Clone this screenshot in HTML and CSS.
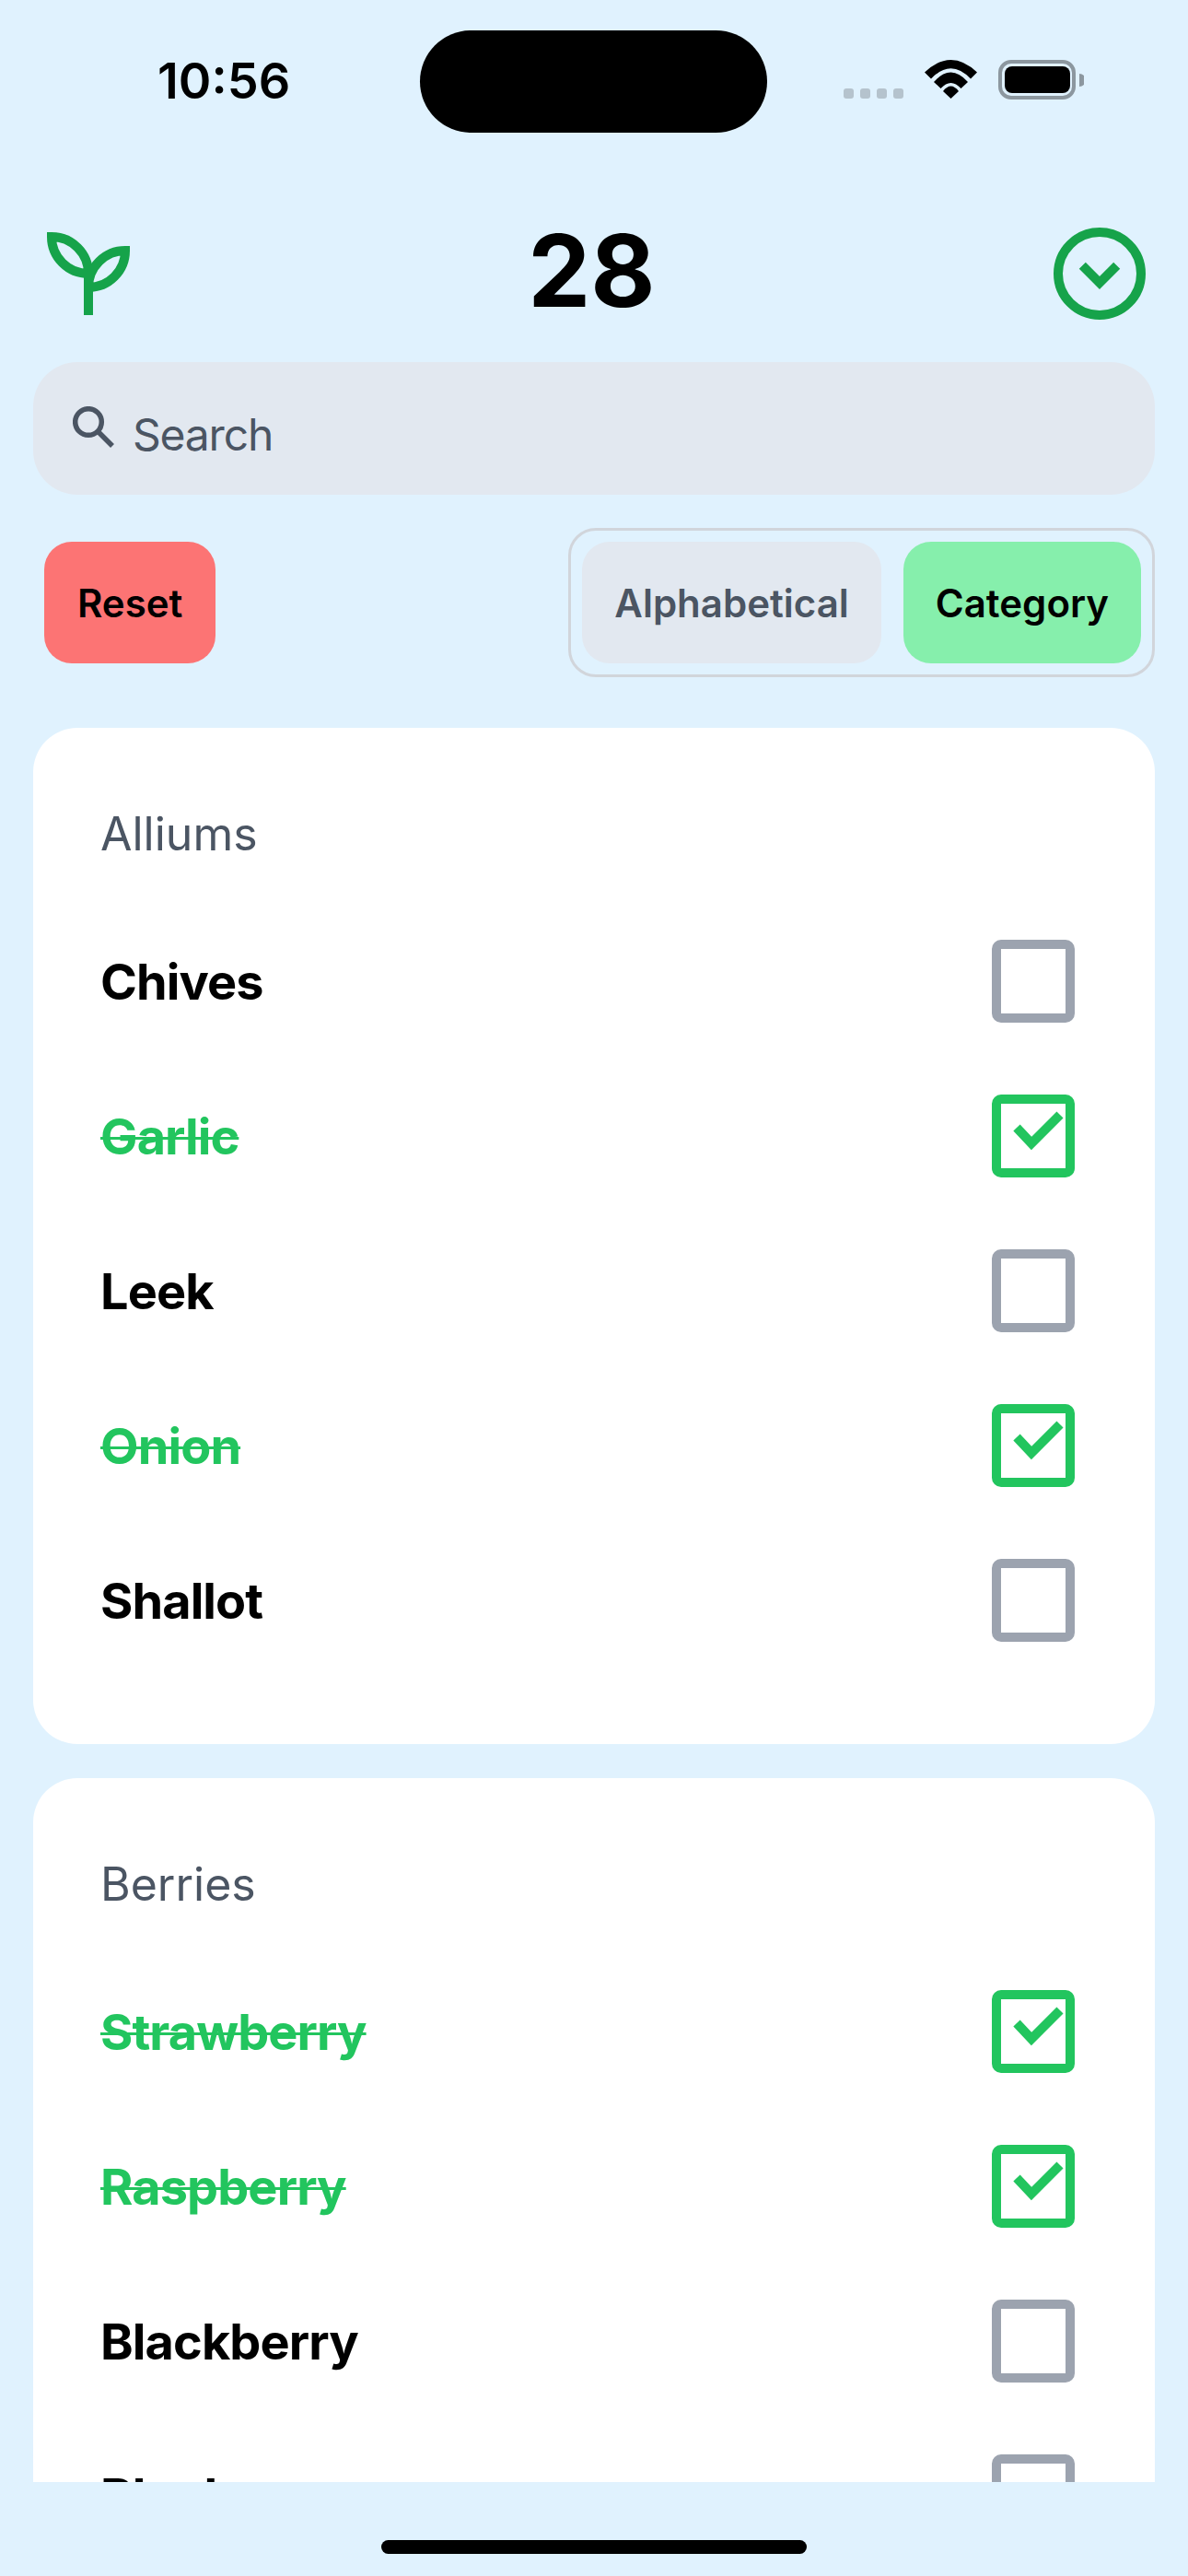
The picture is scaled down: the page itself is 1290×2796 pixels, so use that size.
FILE: index.html
```html
<!DOCTYPE html>
<html lang="en">

<head>
  <meta charset="UTF-8">
  <meta name="viewport" content="width=device-width, initial-scale=1.0">
  <title>Garden</title>
  <link rel="stylesheet" href="styles.css">
</head>

<body>
  <div class="screen">
    <div class="status">
      <span class="time">10:56</span>
      <div class="island"></div>
      <div class="status-icons">
        <div class="signal"><i></i><i></i><i></i><i></i></div>
        <svg class="wifi" width="57" height="42" viewBox="0 0 57 42">
          <path d="M0 13.5Q28.5 -13.5 57 13.5L50 20.5Q28.5 -2 7 20.5Z" />
          <path d="M10 24Q28.5 3 47 24L39.5 31Q28.5 19 17.500 31Z" />
          <path d="M20 34Q28.500 23 37 34L28.5 42Z" />
        </svg>
        <svg class="battery" width="93" height="43" viewBox="0 0 93 43">
          <rect x="2" y="2" width="80" height="39" rx="12" fill="none" stroke="#8c979f" stroke-width="4" />
          <rect x="7" y="7" width="71" height="29" rx="8" />
          <path d="M88 15a7 7 0 0 1 0 14Z" fill="#8c979f" />
        </svg>
      </div>
    </div>

    <header class="top">
      <svg class="sprout" width="90" height="90" viewBox="0 0 90 90" fill="none" stroke="#16a34a" stroke-width="10">
        <path d="M5 5A40 40 0 0 1 45 45A40 40 0 0 1 5 5Z" />
        <path d="M85 20A40 40 0 0 0 45 60A40 40 0 0 0 85 20Z" />
        <path d="M45 45V90" />
      </svg>
      <h1 class="count">28</h1>
      <svg class="collapse" width="100" height="100" viewBox="0 0 100 100" fill="none" stroke="#16a34a" stroke-width="10">
        <circle cx="50" cy="50" r="45" />
        <path d="M31.300 41.300L50 60L68.700 41.300" />
      </svg>
    </header>

    <div class="search">
      <svg width="45" height="45" viewBox="0 0 45 45" fill="none" stroke="#4b5563" stroke-width="5.500">
        <circle cx="17" cy="17" r="14.300" />
        <path d="M27 27L43 43" />
      </svg>
      <span>Search</span>
    </div>

    <div class="controls">
      <button class="btn reset">Reset</button>
      <div class="sort">
        <button class="btn">Alphabetical</button>
        <button class="btn active">Category</button>
      </div>
    </div>

    <main class="list">
      <section class="card">
        <h2>Alliums</h2>
        <ul>
          <li><span>Chives</span><span class="box"></span></li>
          <li class="done"><span>Garlic</span><span class="box"><svg width="70" height="70" viewBox="0 0 70 70" fill="none" stroke="#22c55e" stroke-width="10"><path d="M17 26L33 43L64 12" /></svg></span></li>
          <li><span>Leek</span><span class="box"></span></li>
          <li class="done"><span>Onion</span><span class="box"><svg width="70" height="70" viewBox="0 0 70 70" fill="none" stroke="#22c55e" stroke-width="10"><path d="M17 26L33 43L64 12" /></svg></span></li>
          <li><span>Shallot</span><span class="box"></span></li>
        </ul>
      </section>
      <section class="card">
        <h2>Berries</h2>
        <ul>
          <li class="done"><span>Strawberry</span><span class="box"><svg width="70" height="70" viewBox="0 0 70 70" fill="none" stroke="#22c55e" stroke-width="10"><path d="M17 26L33 43L64 12" /></svg></span></li>
          <li class="done"><span>Raspberry</span><span class="box"><svg width="70" height="70" viewBox="0 0 70 70" fill="none" stroke="#22c55e" stroke-width="10"><path d="M17 26L33 43L64 12" /></svg></span></li>
          <li><span>Blackberry</span><span class="box"></span></li>
          <li><span>Blueberry</span><span class="box"></span></li>
        </ul>
      </section>
    </main>

    <div class="home-bar"></div>
  </div>
</body>

</html>
```

FILE: styles.css
```css
* {
  box-sizing: border-box;
}

html,
body {
  margin: 0;
  height: 2796px;
  overflow: hidden;
  background-color: #e0f2fe;
}

.screen {
  position: relative;
  width: 1290px;
  height: 2796px;
  display: flex;
  flex-direction: column;
  font-family: Inter, "Liberation Sans", sans-serif;
  color: #000;
}

.status {
  height: 240px;
  padding: 56px 113px 0 171px;
  display: flex;
  justify-content: space-between;
  align-items: flex-start;
}

.time {
  font-size: 54px;
  line-height: 64px;
  font-weight: 600;
}

.island {
  position: absolute;
  left: 456px;
  top: 33px;
  width: 377px;
  height: 111px;
  border-radius: 56px;
  background-color: #000;
}

.status-icons {
  display: flex;
  align-items: flex-end;
  margin-top: 9px;
}

.signal {
  display: flex;
  gap: 7px;
  margin-right: 23px;
  padding-bottom: 1px;
}

.signal i {
  width: 11px;
  height: 11px;
  border-radius: 3px;
  background-color: #b5c3cd;
}

.wifi {
  margin-right: 23px;
  margin-bottom: 1px;
}

.battery {
  display: block;
}

.top {
  height: 114px;
  padding: 0 46px 0 51px;
  display: flex;
  justify-content: space-between;
  align-items: center;
}

.count {
  margin: 0 0 6px;
  font-size: 108px;
  line-height: 108px;
  font-weight: 700;
}

.search {
  margin: 39px 36px 0;
  height: 144px;
  padding: 12px 0 0 43px;
  display: flex;
  align-items: center;
  gap: 20px;
  border-radius: 48px;
  background-color: #e2e8f0;
  color: #4b5563;
  font-size: 48px;
  letter-spacing: -1.2px;
}

.search svg {
  margin-top: -16px;
}

.controls {
  margin: 36px 36px 0 48px;
  display: flex;
  justify-content: space-between;
  align-items: center;
}

.btn {
  height: 132px;
  padding: 0 35px;
  border: 0;
  border-radius: 30px;
  background-color: #e2e8f0;
  color: #4b5563;
  font-family: inherit;
  font-size: 42px;
  font-weight: 600;
}

.reset {
  padding: 0 36px;
  background-color: #fc7474;
  color: #000;
}

.sort {
  display: flex;
  gap: 24px;
  padding: 12px;
  border: 3px solid #d1d5db;
  border-radius: 30px;
}

.active {
  background-color: #86efac;
  color: #000;
}

.list {
  margin: 55px 36px 0;
  height: 1904px;
  overflow: hidden;
}

.card {
  margin-bottom: 37px;
  padding: 85px 74px 72px 73px;
  border-radius: 48px;
  background-color: #fff;
}

.card h2 {
  margin: 0 0 46px;
  font-size: 50px;
  line-height: 60px;
  font-weight: 400;
  color: #4b5563;
}

.card ul {
  margin: 0;
  padding: 0;
  list-style: none;
}

.card li {
  height: 168px;
  display: flex;
  justify-content: space-between;
  align-items: center;
  font-size: 54px;
  font-weight: 650;
  letter-spacing: -0.9px;
}

.box {
  width: 90px;
  height: 90px;
  margin-right: 13px;
  border: 10px solid #9ca3af;
  border-radius: 10px;
}

.box svg {
  display: block;
}

.done {
  color: #22c55e;
}

.done span:first-child {
  text-decoration: line-through;
  text-decoration-thickness: 3px;
}

.done .box {
  border-color: #22c55e;
}

.home-bar {
  position: absolute;
  left: 414px;
  top: 2757px;
  width: 462px;
  height: 15px;
  border-radius: 8px;
  background-color: #000;
}
```
